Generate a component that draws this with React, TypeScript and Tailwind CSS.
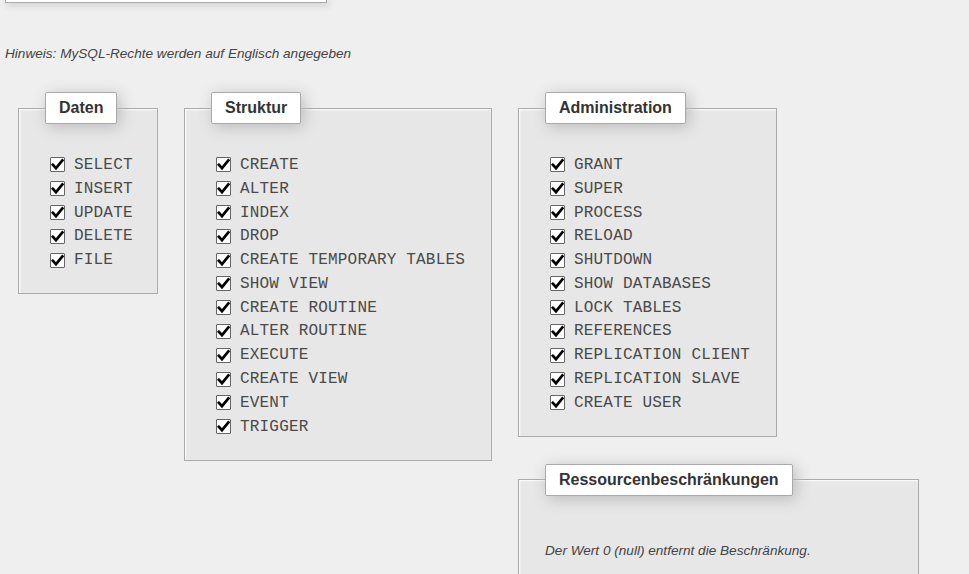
import React from 'react';

const daten = ['SELECT', 'INSERT', 'UPDATE', 'DELETE', 'FILE'];
const struktur = [
  'CREATE',
  'ALTER',
  'INDEX',
  'DROP',
  'CREATE TEMPORARY TABLES',
  'SHOW VIEW',
  'CREATE ROUTINE',
  'ALTER ROUTINE',
  'EXECUTE',
  'CREATE VIEW',
  'EVENT',
  'TRIGGER',
];
const administration = [
  'GRANT',
  'SUPER',
  'PROCESS',
  'RELOAD',
  'SHUTDOWN',
  'SHOW DATABASES',
  'LOCK TABLES',
  'REFERENCES',
  'REPLICATION CLIENT',
  'REPLICATION SLAVE',
  'CREATE USER',
];

const Check: React.FC = () => (
  <span className="w-[15px] h-[15px] shrink-0 bg-white border border-[#666] rounded-[1px] flex items-center justify-center">
    <svg width="13" height="13" viewBox="0 0 13 13">
      <polyline points="1.8,6.8 5,10.2 11.4,2.4" fill="none" stroke="#000" strokeWidth="2.7" strokeLinecap="square" />
    </svg>
  </span>
);

const Legend: React.FC<{ title: string }> = ({ title }) => (
  <legend className="bg-white border border-[#aaa] rounded-[2px] px-[13px] py-[6px] leading-[18px] text-[16px] font-bold text-[#333] shadow-[3px_3px_15px_#bbb]">
    {title}
  </legend>
);

const PrivBox: React.FC<{ title: string; items: string[]; width: string }> = ({ title, items, width }) => (
  <fieldset className={`${width} shrink-0 bg-[#e7e7e7] border border-[#aaa] pl-[26px] pb-[21px] shadow-[inset_1px_1px_2px_#fff]`}>
    <Legend title={title} />
    <div className="mt-[29px] ml-[5px]">
      {items.map((it) => (
        <label key={it} className="h-[23.8px] flex items-center gap-[9px]">
          <Check />
          <span className="font-['Liberation_Mono',monospace] text-[16px] tracking-[0.18px] text-[#4a4a4a] whitespace-pre">{it}</span>
        </label>
      ))}
    </div>
  </fieldset>
);

export default function App() {
  return (
    <div className="h-screen bg-[#efefef] font-['Liberation_Sans',Arial,sans-serif] overflow-hidden">
      <div className="ml-[5px] w-[322px] h-[3px] bg-white border-x border-b border-[#aaa] shadow-[2px_2px_6px_#bbb]" />
      <p className="mt-[43px] px-[5px] text-[13.6px] leading-[15px] italic text-[#444]">
        Hinweis: MySQL-Rechte werden auf Englisch angegeben
      </p>
      <div className="flex items-start gap-[26px] pl-[18px] mt-[31px]">
        <PrivBox title="Daten" items={daten} width="w-[140px]" />
        <PrivBox title="Struktur" items={struktur} width="w-[308px]" />
        <div className="flex flex-col gap-[27px]">
          <PrivBox title="Administration" items={administration} width="w-[259px]" />
          <fieldset className="w-[401px] bg-[#e7e7e7] border border-[#aaa] pl-[26px] pb-[23px] shadow-[inset_1px_1px_2px_#fff]">
            <Legend title="Ressourcenbeschränkungen" />
            <p className="mt-[47px] text-[13.6px] leading-[15px] italic text-[#444]">
              Der Wert 0 (null) entfernt die Beschränkung.
            </p>
            <div className="h-[60px]" />
          </fieldset>
        </div>
      </div>
    </div>
  );
}
